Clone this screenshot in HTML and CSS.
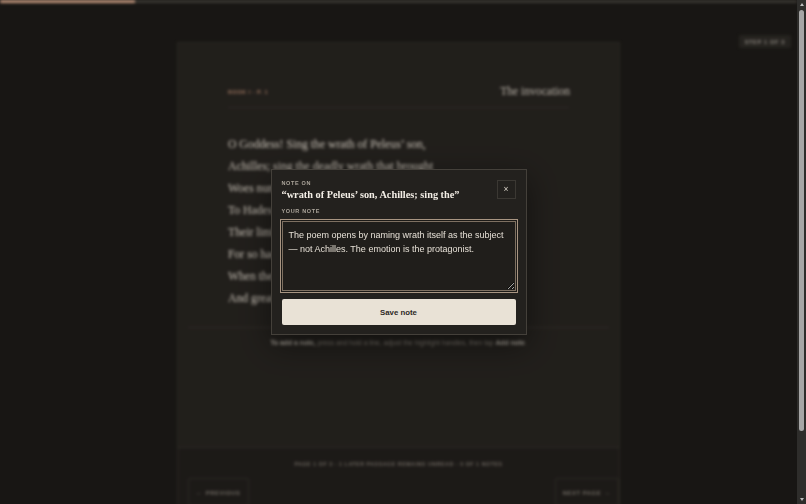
FILE: index.html
```html
<!DOCTYPE html>
<html lang="en">
<head>
<meta charset="utf-8">
<title>The invocation — Reader</title>
<link rel="stylesheet" href="styles.css">
</head>
<body>
<div class="app">
  <div class="progress"><div class="progress-fill" style="width:17%"></div></div>
  <div class="step-pill">STEP 1 OF 3</div>
  <main class="reader">
    <article class="sheet">
      <header class="sheet-head">
        <span class="book-label">BOOK I · P. 1</span>
        <h1 class="sheet-title">The invocation</h1>
      </header>
      <div class="poem">
        <p class="line">O Goddess! Sing the wrath of Peleus’ son,</p>
        <p class="line">Achilles; sing the deadly wrath that brought</p>
        <p class="line">Woes numberless upon the Greeks, and swept</p>
        <p class="line">To Hades many a valiant soul, and gave</p>
        <p class="line">Their limbs a prey to dogs and birds of air,—</p>
        <p class="line">For so had Jove appointed,—from the time</p>
        <p class="line">When the two chiefs, Atrides, king of men,</p>
        <p class="line">And great Achilles, parted first as foes.</p>
      </div>
      <p class="hint"><b>To add a note,</b> press and hold a line, adjust the highlight handles, then tap <b>Add note</b>.</p>
    </article>
    <footer class="reader-foot">
      <div class="meta">PAGE 1 OF 3 · 1 LATER PASSAGE REMAINS UNREAD · 0 OF 1 NOTES</div>
      <nav class="nav">
        <button class="nav-btn"><span class="arrow">←</span> PREVIOUS</button>
        <button class="nav-btn">NEXT PAGE <span class="arrow">→</span></button>
      </nav>
    </footer>
  </main>
</div>

<div class="scrollbar" aria-hidden="true">
  <span class="sb-arrow sb-up"></span>
  <div class="sb-track"><div class="sb-thumb"></div></div>
  <span class="sb-arrow sb-down"></span>
</div>

<div class="overlay">
  <div class="modal" role="dialog" aria-label="Note">
    <div class="modal-head">
      <div class="modal-head-text">
        <div class="eyebrow">NOTE ON</div>
        <h2 class="modal-title">“wrath of Peleus’ son, Achilles; sing the”</h2>
      </div>
      <button class="close" aria-label="Close">×</button>
    </div>
    <label class="eyebrow field-label" for="note">YOUR NOTE</label>
    <textarea id="note" class="note-input">The poem opens by naming wrath itself as the subject — not Achilles. The emotion is the protagonist.</textarea>
    <button class="save">Save note</button>
  </div>
</div>
</body>
</html>
```

FILE: styles.css
```css
:root {
  color-scheme: dark;
}

body {
  margin: 0 9px 0 0;
  background: #1d1b18;
  font-family: "Liberation Sans", Arial, sans-serif;
  color: #ddd5c9;
}

.app {
  display: flow-root;
  filter: blur(1.4px);
  padding-bottom: 76px;
}

.progress {
  position: fixed;
  top: 0;
  left: 0;
  right: 0;
  height: 3px;
  background: #45413c;
}
.progress-fill {
  height: 100%;
  background: #eab598;
}

.step-pill {
  position: fixed;
  top: 35px;
  right: 6px;
  padding: 3.5px 6px;
  background: #2d2a26;
  border-radius: 2px;
  font-size: 5.5px;
  font-weight: 700;
  letter-spacing: 0.7px;
  line-height: 6px;
  color: #aaa49b;
}

/* drawn scrollbar (browser chrome) */
.scrollbar {
  position: fixed;
  top: 0;
  right: 0;
  bottom: 0;
  width: 9px;
  background: #2e2d2b;
  display: flex;
  flex-direction: column;
  align-items: center;
}
.sb-track {
  flex: 1;
  width: 100%;
  padding-top: 1px;
}
.sb-thumb {
  height: 421px;
  margin: 0 2px;
  background: #a6a6a6;
  border-radius: 3px;
}
.sb-arrow {
  width: 0;
  height: 0;
  margin: 3px 0;
  border-left: 2.5px solid transparent;
  border-right: 2.5px solid transparent;
}
.sb-up {
  border-bottom: 3px solid #bdbdbd;
}
.sb-down {
  border-top: 3px solid #bdbdbd;
}

.reader {
  width: 443px;
  box-sizing: border-box;
  margin: 42px auto 0;
  border: 1px solid #322e2a;
  border-bottom: none;
  background: #221f1c;
}

.sheet {
  height: 405px;
  box-sizing: border-box;
  padding: 41px 50px 0;
  background: #282521;
  border-bottom: 1px solid #36322d;
  display: flex;
  flex-direction: column;
}

.sheet-head {
  display: flex;
  justify-content: space-between;
  align-items: center;
  height: 16px;
  padding-bottom: 7px;
  border-bottom: 1px solid #36322d;
}
.book-label {
  font-size: 5.5px;
  font-weight: 700;
  letter-spacing: 0.5px;
  color: #b88a70;
}
.sheet-title {
  margin: 0 -1px 0 0;
  font-family: "Liberation Serif", "Times New Roman", serif;
  font-weight: 400;
  font-size: 11.6px;
  line-height: 16px;
  color: #ddd5c9;
}

.poem {
  margin-top: 26px;
}
.line {
  margin: 0;
  font-family: "Liberation Serif", "Times New Roman", serif;
  font-size: 11.7px;
  line-height: 22px;
  color: #e8e0d4;
}

.hint {
  margin: 17px -40px 0;
  padding-top: 8px;
  border-top: 1px solid #36322d;
  text-align: center;
  font-size: 6.75px;
  line-height: 14px;
  color: #8f887f;
}
.hint b {
  color: #c2bbb0;
}

.reader-foot {
  padding: 11px 0 0;
}
.meta {
  text-align: center;
  font-size: 5.2px;
  line-height: 10px;
  letter-spacing: 0.6px;
  font-weight: 700;
  color: #837c73;
}
.nav {
  display: flex;
  justify-content: space-between;
  margin-top: 9px;
  padding: 0 0 0 10px;
}
.nav-btn {
  height: 28px;
  padding: 0 7px;
  background: transparent;
  border: 1px solid #36322d;
  border-radius: 2px;
  font-family: "Liberation Sans", Arial, sans-serif;
  font-size: 5.8px;
  font-weight: 700;
  letter-spacing: 0.6px;
  color: #8a837a;
}
.nav-btn .arrow {
  font-size: 7px;
  color: #6e6861;
}

.overlay {
  position: fixed;
  top: 0;
  left: 0;
  bottom: 0;
  right: 9px;
  display: flex;
  align-items: center;
  justify-content: center;
  background: rgba(0, 0, 0, 0.16);
}

.modal {
  width: 256px;
  box-sizing: border-box;
  padding: 9px 10px;
  background: #23211e;
  border: 1px solid #44403a;
  box-shadow: 0 10px 30px rgba(0, 0, 0, 0.45);
  display: flex;
  flex-direction: column;
}

.modal-head {
  display: flex;
  justify-content: space-between;
  align-items: flex-start;
}
.eyebrow {
  font-size: 5.5px;
  font-weight: 700;
  letter-spacing: 0.65px;
  line-height: 8px;
  color: #aba49a;
}
.modal-title {
  margin: 1px 0 0;
  font-family: "Liberation Serif", "Times New Roman", serif;
  font-weight: 700;
  font-size: 10.3px;
  line-height: 14px;
  color: #f3eee6;
}
.close {
  width: 19px;
  height: 19px;
  margin-top: 1px;
  padding: 0;
  background: transparent;
  border: 1px solid #3b3833;
  color: #d9d3c9;
  font-family: "Liberation Sans", Arial, sans-serif;
  font-size: 8.5px;
  line-height: 1;
}

.field-label {
  display: block;
  margin-top: 5px;
}

.note-input {
  margin-top: 6px;
  height: 70px;
  box-sizing: border-box;
  padding: 6px;
  background: #201e1b;
  border: 1px solid #7e7061;
  box-shadow: 0 0 0 1px #1c1a17, 0 0 0 2px #a89582;
  outline: none;
  border-radius: 0;
  font-family: "Liberation Sans", Arial, sans-serif;
  font-size: 9px;
  line-height: 14px;
  color: #e6e0d6;
  resize: vertical;
}

.save {
  margin-top: 8px;
  height: 26px;
  border: none;
  border-radius: 2px;
  background: #e9e2d6;
  color: #2d2925;
  font-family: "Liberation Sans", Arial, sans-serif;
  font-weight: 700;
  font-size: 7.8px;
}
```
